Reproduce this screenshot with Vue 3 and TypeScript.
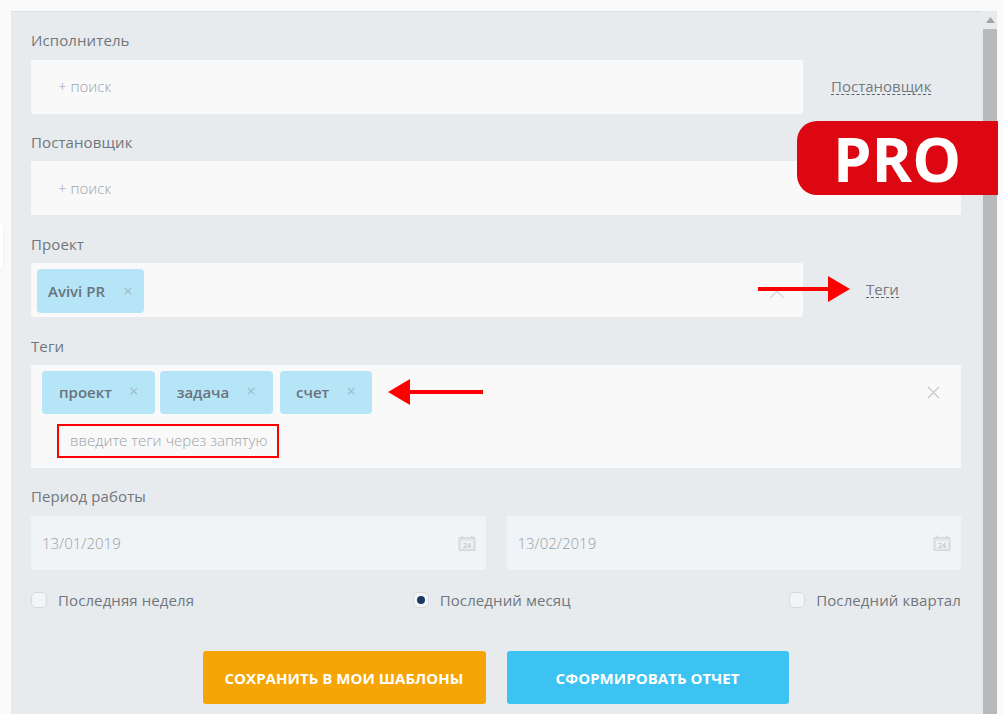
<script setup lang="ts">
const tags = ['проект', 'задача', 'счет']
const periods = [
  { label: 'Последняя неделя', on: false },
  { label: 'Последний месяц', on: true },
  { label: 'Последний квартал', on: false },
]
const dates = ['13/01/2019', '13/02/2019']
</script>

<template>
  <div class="page">
    <div class="side-tab"></div>
    <main class="panel">
      <section class="field">
        <label>Исполнитель</label>
        <div class="with-link">
          <div class="box search">+ поиск</div>
          <a class="link link-a">Постановщик</a>
        </div>
      </section>
      <section class="field">
        <label>Постановщик</label>
        <div class="box search">+ поиск</div>
      </section>
      <section class="field">
        <label>Проект</label>
        <div class="with-link">
          <div class="box project">
            <span class="chip chip-project">Avivi PR<i class="x">×</i></span>
            <svg class="caret" width="16" height="9" viewBox="0 0 16 9"><path d="M1 8 8 1.5 15 8" fill="none" stroke="#d5d8da" stroke-width="1.4"/></svg>
          </div>
          <a class="link link-b">Теги</a>
        </div>
      </section>
      <section class="field">
        <label>Теги</label>
        <div class="box tags">
          <div class="chips">
            <span v-for="t in tags" :key="t" class="chip chip-tag">{{ t }}<i class="x">×</i></span>
          </div>
          <div class="hint">введите теги через запятую</div>
          <svg class="clear" width="13" height="13" viewBox="0 0 13 13"><path d="M1 1 12 12M12 1 1 12" stroke="#c4c8cb" stroke-width="1.2"/></svg>
        </div>
      </section>
      <section class="field">
        <label>Период работы</label>
        <div class="dates">
          <div v-for="d in dates" :key="d" class="box date">
            <span>{{ d }}</span>
            <svg width="18" height="16" viewBox="0 0 18 16">
              <path d="M1 2.5h16v13H1z" fill="#dfe3e5" stroke="#d2d6d8"/>
              <path d="M4 0.5v3M14 0.5v3" stroke="#cfd3d5" stroke-width="1.5"/>
              <rect x="3" y="5.5" width="12" height="8" fill="#eef1f3"/>
              <text x="9" y="12.5" text-anchor="middle" class="cal-num">24</text>
            </svg>
          </div>
        </div>
      </section>
      <div class="periods">
        <div v-for="p in periods" :key="p.label" class="opt">
          <span class="check" :class="{ on: p.on }"></span>{{ p.label }}
        </div>
      </div>
      <div class="actions">
        <button class="btn orange">СОХРАНИТЬ В МОИ ШАБЛОНЫ</button>
        <button class="btn blue">СФОРМИРОВАТЬ ОТЧЕТ</button>
      </div>
    </main>
    <div class="scrollbar">
      <svg width="9" height="6" viewBox="0 0 9 6"><path d="M4.5 0 9 6H0z" fill="#a3a3a3"/></svg>
      <div class="thumb"></div>
    </div>

    <div class="pro">PRO</div>
    <svg class="arrow arrow-right" width="92" height="28" viewBox="0 0 92 28"><path d="M0 12h70V1l22 13-22 13V16H0z" fill="#f00"/></svg>
    <svg class="arrow arrow-left" width="95" height="28" viewBox="0 0 95 28"><path d="M95 12H22V1L0 14l22 13V16h73z" fill="#f00"/></svg>
  </div>
</template>

<style>
html, body { margin: 0; padding: 0; background: #fafafa; }
</style>

<style scoped>
.page {
  position: relative;
  width: 1004px;
  height: 714px;
  overflow: hidden;
  display: flex;
  box-sizing: border-box;
  padding: 11px 7px 0 11px;
  background: #fafafa;
  font-family: "Open Sans", "Noto Sans", sans-serif;
  color: #6f767d;
}
.side-tab {
  position: absolute;
  left: -8px;
  top: 222px;
  width: 11px;
  height: 48px;
  background: #fff;
  border-radius: 0 5px 5px 0;
  box-shadow: 0 1px 4px rgba(0, 0, 0, 0.06);
}
.panel {
  flex: none;
  width: 970px;
  box-sizing: border-box;
  padding: 18px 20px 0;
  background: #e8ebee;
  border-top: 1px solid #d8dfe6;
}
.scrollbar {
  flex: none;
  background: #e8ebee;
  display: flex;
  flex-direction: column;
  align-items: center;
  padding: 6px 0 0 2px;
  box-sizing: border-box;
  width: 16px;
}
.scrollbar svg { flex: none; }
.thumb {
  margin-top: 6px;
  width: 14px;
  flex: 1;
  background: #b9b9b9;
}
.field label {
  display: block;
  height: 30px;
  line-height: 22px;
  font-size: 15px;
  letter-spacing: 0.1px;
  color: #6f767d;
}
.field:first-child label,
.field:nth-child(5) label { line-height: 20px; }
.field + .field { margin-top: 18px; }
.field:nth-child(2) { margin-top: 17px; }
.field:nth-child(2) .search { line-height: 55px; }
.with-link { display: flex; align-items: center; }
.box {
  position: relative;
  box-sizing: border-box;
  background: #f9f9f9;
  flex: 1;
  border-radius: 2px;
}
.with-link .box { flex: none; width: 772px; }
.search {
  height: 54px;
  line-height: 53px;
  padding-left: 27px;
  font-size: 15px;
  font-weight: 300;
  color: #a0a4a7;
}
.link {
  font-size: 15px;
  color: #737a84;
  border-bottom: 1px dashed #5a6068;
  line-height: 15px;
}
.link-a { margin-left: 28px; }
.link-b { margin-left: 63px; }
.project {
  height: 54px;
  padding: 6px 6px 4px;
  display: flex;
  align-items: flex-start;
}
.caret { position: absolute; right: 18px; top: 27px; }
.chip {
  display: inline-flex;
  align-items: center;
  background: #b5e5f6;
  border-radius: 4px;
  font-weight: 600;
  font-size: 15px;
  color: #69737b;
  box-sizing: border-box;
}
.chip-project { height: 44px; padding: 0 11px; }
.chip-tag { height: 43px; padding: 0 16px 2px 17px; }
.chip-tag:nth-child(2) { padding-right: 17px; }
.chip-tag:nth-child(3) { padding-left: 16px; margin-left: 2px; }
.x {
  font-style: normal;
  font-weight: 400;
  font-size: 17px;
  color: #a2bcc7;
  margin-left: 17px;
  line-height: 1;
  position: relative;
  top: -1px;
}
.chip-project .x { margin-left: 18px; }
.tags { height: 103px; padding: 6px 11px; }
.chips { display: flex; gap: 5px; }
.hint {
  margin: 10px 0 0 15px;
  width: fit-content;
  box-sizing: border-box;
  height: 34px;
  line-height: 29px;
  padding: 0 10px 0 11px;
  border: 2px solid #f00;
  font-size: 15px;
  font-weight: 300;
  color: #a0a4a7;
}
.clear { position: absolute; right: 21px; top: 21px; }
.dates { display: flex; gap: 21px; }
.date {
  height: 54px;
  background: #f1f4f6;
  padding: 0 10px 0 11px;
  display: flex;
  align-items: center;
  justify-content: space-between;
  font-size: 15px;
  font-weight: 300;
  color: #9a9fa3;
}
.cal-num { font: 7px "Open Sans", sans-serif; fill: #b5babd; }
.periods {
  display: flex;
  justify-content: space-between;
  align-items: center;
  height: 30px;
  margin-top: 15px;
  font-size: 15px;
  letter-spacing: 0.1px;
  color: #6f767d;
}
.opt { display: flex; align-items: center; }
.check {
  width: 16px;
  height: 16px;
  margin-right: 11px;
  box-sizing: border-box;
  border: 1px solid #d8dbde;
  border-radius: 5px;
  background: #f3f4f5;
  position: relative;
}
.check.on::after {
  content: "";
  position: absolute;
  left: 3px;
  top: 3px;
  width: 8px;
  height: 8px;
  border-radius: 50%;
  background: #1c3a63;
}
.actions {
  display: flex;
  justify-content: center;
  gap: 21px;
  margin-top: 36px;
  padding-right: 1px;
}
.btn {
  width: 283px;
  height: 53px;
  border: 0;
  border-radius: 3px;
  color: #fff;
  font: 700 15px "Open Sans", sans-serif;
  letter-spacing: 0.05px;
  padding: 0;
}
.blue { width: 282px; background: #3cc3f1; }
.orange { background: #f5a505; }
.pro {
  position: absolute;
  left: 797px;
  top: 121px;
  width: 201px;
  height: 74px;
  box-sizing: border-box;
  padding-left: 36px;
  border-radius: 20px 0 0 20px;
  background: #dc0711;
  color: #fff;
  font-weight: 700;
  font-size: 61.5px;
  line-height: 74px;
}
.arrow { position: absolute; }
.arrow-right { left: 758px; top: 275px; }
.arrow-left { left: 388px; top: 378px; }
</style>
